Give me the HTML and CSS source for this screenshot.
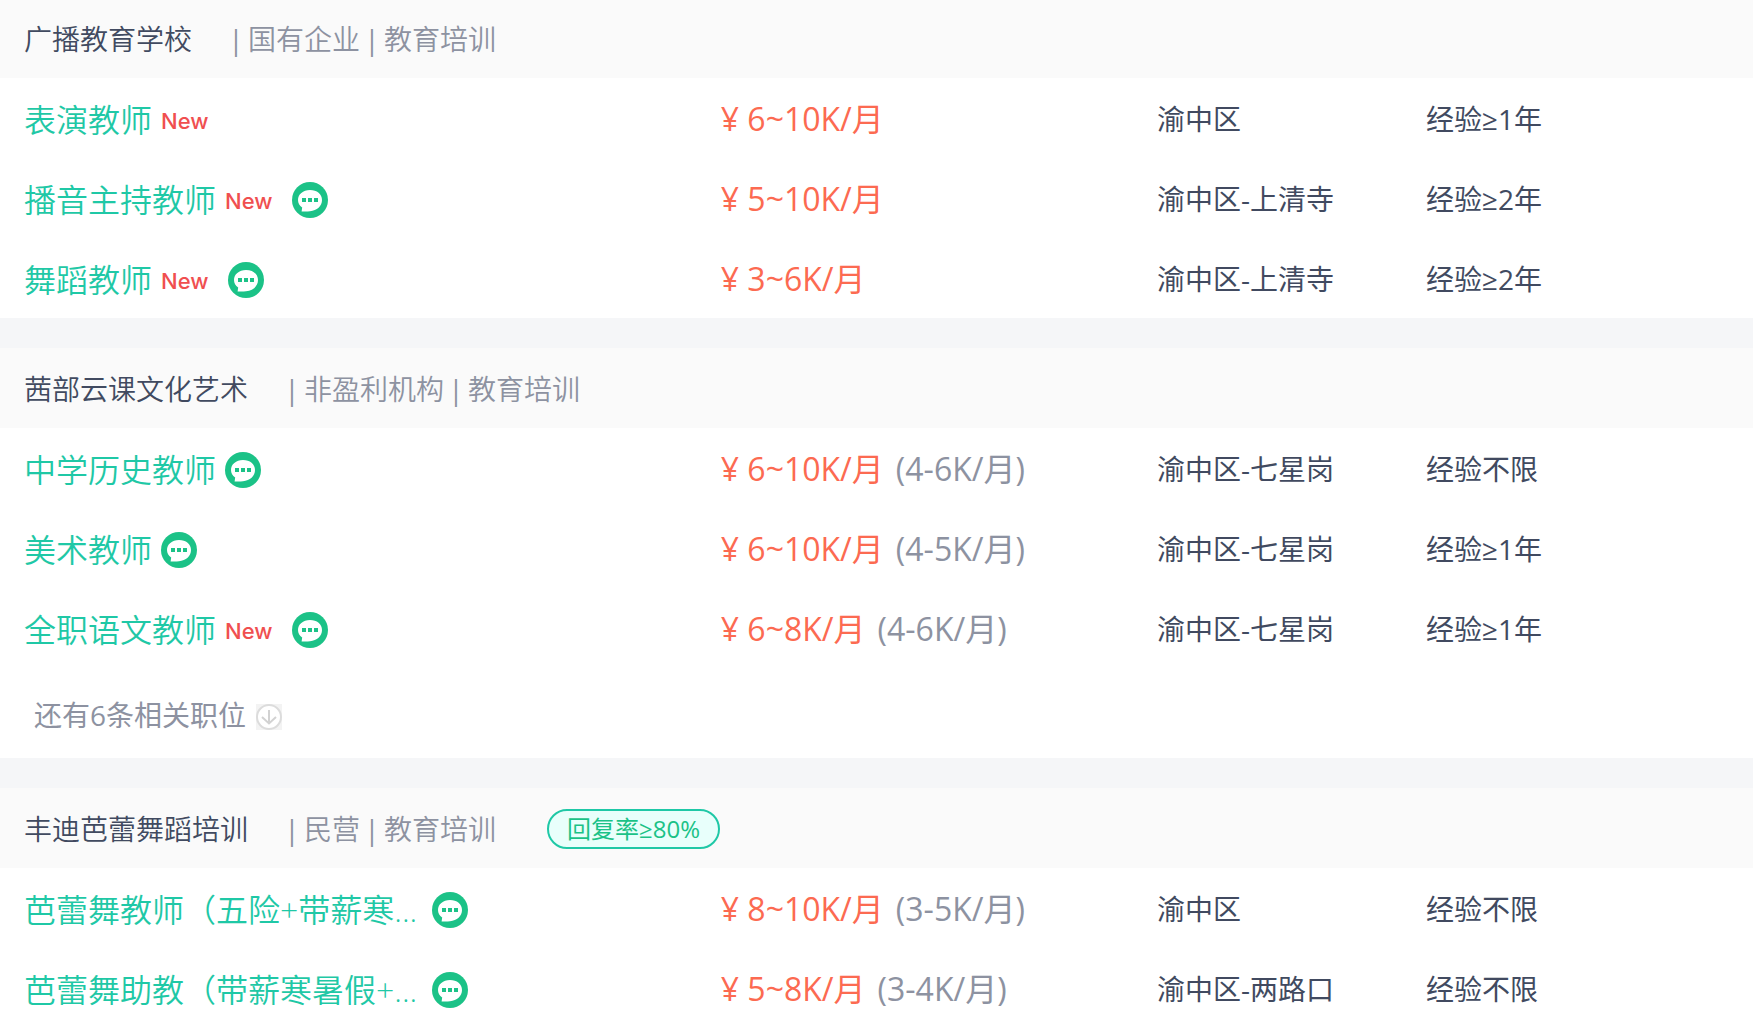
FILE: index.html
```html
<!DOCTYPE html>
<html lang="zh-CN">
<head>
<meta charset="utf-8">
<meta name="viewport" content="width=device-width, initial-scale=1">
<title>职位列表</title>
<link rel="stylesheet" href="styles.css">
</head>
<body>
<svg class="sprite" aria-hidden="true">
  <symbol id="chat" viewBox="0 0 36 36">
    <circle cx="18" cy="18" r="18" fill="#1bc287"/>
    <path fill="#fff" d="M18 8C11 8 6 12.400 6 18c0 3 1.500 5.700 4.200 7.500L9.600 29.600c2.600 0 5.200-.1 8.400-.4C25 28.800 30 24 30 18S25 8 18 8z"/>
    <path fill="#1bc287" d="M10 16h4v4h-4zM16 16h4v4h-4zM22 16h4v4h-4z"/>
  </symbol>
  <symbol id="down" viewBox="0 0 26 26">
    <path fill="#f3f3f3" d="M0 0h26v26H0z"/>
    <circle cx="13" cy="13" r="12" fill="#fff" stroke="#dcdcdc" stroke-width="2"/>
    <path fill="none" stroke="#d2d2d2" stroke-width="2" d="M13 6v13M6 13l7 6.500 7-6.500"/>
  </symbol>
</svg>
<main>
  <section class="company">
    <header class="head">
      <h2 class="name">广播教育学校</h2>
      <p class="meta"><span class="bar">|</span>国有企业<span class="bar">|</span>教育培训</p>
    </header>
    <table class="jobs">
      <tr>
        <td class="job"><div class="line"><a href="#">表演教师</a><span class="new">New</span></div></td>
        <td class="pay">¥ 6~10K/月</td><td class="area">渝中区</td><td class="exp">经验≥1年</td>
      </tr>
      <tr>
        <td class="job"><div class="line"><a href="#">播音主持教师</a><span class="new">New</span><button class="chat" aria-label="聊天"><svg><use href="#chat"/></svg></button></div></td>
        <td class="pay">¥ 5~10K/月</td><td class="area">渝中区-上清寺</td><td class="exp">经验≥2年</td>
      </tr>
      <tr>
        <td class="job"><div class="line"><a href="#">舞蹈教师</a><span class="new">New</span><button class="chat" aria-label="聊天"><svg><use href="#chat"/></svg></button></div></td>
        <td class="pay">¥ 3~6K/月</td><td class="area">渝中区-上清寺</td><td class="exp">经验≥2年</td>
      </tr>
    </table>
  </section>
  <section class="company">
    <header class="head">
      <h2 class="name">茜部云课文化艺术</h2>
      <p class="meta"><span class="bar">|</span>非盈利机构<span class="bar">|</span>教育培训</p>
    </header>
    <table class="jobs">
      <tr>
        <td class="job"><div class="line"><a href="#">中学历史教师</a><button class="chat" aria-label="聊天"><svg><use href="#chat"/></svg></button></div></td>
        <td class="pay">¥ 6~10K/月<span class="base">(4-6K/月)</span></td><td class="area">渝中区-七星岗</td><td class="exp">经验不限</td>
      </tr>
      <tr>
        <td class="job"><div class="line"><a href="#">美术教师</a><button class="chat" aria-label="聊天"><svg><use href="#chat"/></svg></button></div></td>
        <td class="pay">¥ 6~10K/月<span class="base">(4-5K/月)</span></td><td class="area">渝中区-七星岗</td><td class="exp">经验≥1年</td>
      </tr>
      <tr>
        <td class="job"><div class="line"><a href="#">全职语文教师</a><span class="new">New</span><button class="chat" aria-label="聊天"><svg><use href="#chat"/></svg></button></div></td>
        <td class="pay">¥ 6~8K/月<span class="base">(4-6K/月)</span></td><td class="area">渝中区-七星岗</td><td class="exp">经验≥1年</td>
      </tr>
    </table>
    <button class="more">还有6条相关职位<svg><use href="#down"/></svg></button>
  </section>
  <section class="company">
    <header class="head">
      <h2 class="name">丰迪芭蕾舞蹈培训</h2>
      <p class="meta"><span class="bar">|</span>民营<span class="bar">|</span>教育培训</p>
      <span class="rate">回复率≥80%</span>
    </header>
    <table class="jobs">
      <tr>
        <td class="job"><div class="line"><a class="cut" href="#">芭蕾舞教师（五险+带薪寒...</a><button class="chat" aria-label="聊天"><svg><use href="#chat"/></svg></button></div></td>
        <td class="pay">¥ 8~10K/月<span class="base">(3-5K/月)</span></td><td class="area">渝中区</td><td class="exp">经验不限</td>
      </tr>
      <tr>
        <td class="job"><div class="line"><a class="cut" href="#">芭蕾舞助教（带薪寒暑假+...</a><button class="chat" aria-label="聊天"><svg><use href="#chat"/></svg></button></div></td>
        <td class="pay">¥ 5~8K/月<span class="base">(3-4K/月)</span></td><td class="area">渝中区-两路口</td><td class="exp">经验不限</td>
      </tr>
    </table>
  </section>
</main>
</body>
</html>
```
FILE: styles.css
```css
* {
  box-sizing: border-box;
}

body {
  margin: 0;
  background: #f5f6f8;
  color: #414a60;
  font: 350 28px/40px "Open Sans", "Noto Sans CJK SC", sans-serif;
}

main {
  display: flex;
  flex-direction: column;
  gap: 30px;
}

button {
  padding: 0;
  border: 0;
  background: none;
  color: inherit;
  font: inherit;
  cursor: pointer;
}

.sprite {
  display: none;
}

.company {
  background: #fff;
}

.head {
  display: flex;
  align-items: center;
  padding: 21px 24px 19px;
  background: #fafafa;
}

.company:first-child .head {
  padding-top: 19px;
}

.name {
  margin: 0 32px 0 0;
  font-size: 28px;
  font-weight: 350;
}

.meta {
  display: flex;
  margin: 0;
  color: #8d92a1;
}

.bar {
  width: 24px;
  font-weight: 400;
  text-align: center;
}

.rate {
  margin-left: 51px;
  padding: 0 18px;
  border: 2px solid #1fc8a6;
  border-radius: 20px;
  background: #e8fffb;
  color: #1bc287;
  font-size: 24px;
  font-weight: 400;
  line-height: 36px;
}

.jobs {
  width: 100%;
  border-collapse: collapse;
  table-layout: fixed;
}

.jobs td {
  height: 80px;
  padding: 2px 0 0;
  font-weight: 400;
  white-space: nowrap;
}

.jobs .job {
  width: 41%;
  padding: 3px 0 0 24px;
  font-size: 32px;
  font-weight: 350;
}

.jobs .pay {
  width: 25%;
  padding-left: 2px;
  color: #fc6a51;
  font-size: 32px;
}

.jobs .area {
  width: 15%;
}

.jobs .exp {
  padding-left: 6px;
}

.line {
  display: flex;
  align-items: center;
  gap: 9px;
}

.line a {
  color: #1fc8a6;
  text-decoration: none;
}

.line .cut {
  margin-right: 6px;
}

.new {
  margin-right: 11px;
  padding-top: 2px;
  color: #f04f50;
  font: 500 22px/40px Inter, sans-serif;
}

.chat {
  width: 36px;
  height: 36px;
}

.chat svg {
  display: block;
  width: 36px;
  height: 36px;
}

.base {
  margin-left: 12px;
  color: #8d92a1;
}

.more {
  display: flex;
  align-items: center;
  gap: 10px;
  height: 90px;
  padding: 3px 0 0 34px;
  color: #8d92a1;
  font-weight: 400;
}

.more svg {
  width: 26px;
  height: 26px;
  margin-top: 4px;
}
```
